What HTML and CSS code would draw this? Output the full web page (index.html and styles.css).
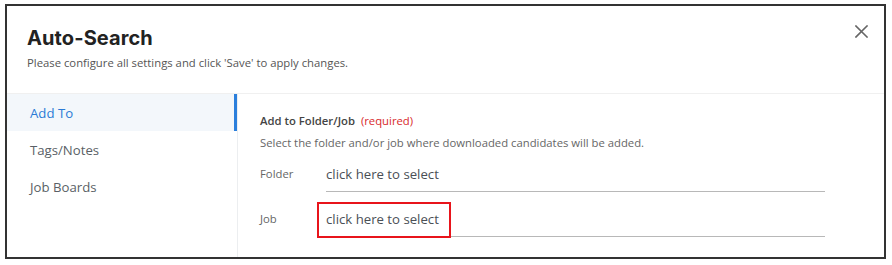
FILE: index.html
```html
<!DOCTYPE html>
<html>
<head>
<meta charset="utf-8">
<link rel="stylesheet" href="styles.css">
</head>
<body>
<div class="dialog">
  <header class="header">
    <div class="header-text">
      <h1 class="title">Auto-Search</h1>
      <p class="subtitle">Please configure all settings and click 'Save' to apply changes.</p>
    </div>
    <button class="close" aria-label="Close">
      <svg width="13" height="13" viewBox="0 0 13 13"><path d="M1 1L12 12M12 1L1 12" stroke="#666" stroke-width="1.6" stroke-linecap="square" fill="none"/></svg>
    </button>
  </header>
  <div class="body">
    <nav class="sidebar">
      <div class="nav-item active">Add To</div>
      <div class="nav-item">Tags/Notes</div>
      <div class="nav-item">Job Boards</div>
    </nav>
    <main class="content">
      <div class="section-title">Add to Folder/Job <span class="required">(required)</span></div>
      <div class="desc">Select the folder and/or job where downloaded candidates will be added.</div>
      <div class="field">
        <label class="field-label">Folder</label>
        <div class="input">click here to select</div>
      </div>
      <div class="field">
        <label class="field-label">Job</label>
        <div class="input">click here to select<span class="highlight"></span></div>
      </div>
    </main>
  </div>
</div>
</body>
</html>
```
FILE: styles.css
```css
html, body { margin: 0; padding: 0; background: #fff; }
body { padding: 4px 0 0 5px; font-family: "Open Sans", "Liberation Sans", sans-serif; }
.dialog {
  width: 881px;
  height: 255px;
  box-sizing: border-box;
  border: 2px solid #333;
  background: #fff;
  display: flex;
  flex-direction: column;
  overflow: hidden;
}
.header {
  height: 88px;
  box-sizing: border-box;
  border-bottom: 1px solid #f0f0f0;
  display: flex;
  justify-content: space-between;
  padding: 0 0 0 20px;
}
.title {
  margin: 0;
  padding-top: 20px;
  font-family: "Inter", "Liberation Sans", sans-serif;
  font-weight: 700;
  font-size: 20px;
  line-height: 24px;
  color: #222;
  letter-spacing: 0.1px;
}
.subtitle {
  margin: 4px 0 0;
  font-size: 11.3px;
  line-height: 17px;
  color: #555;
}
.close {
  border: 0;
  background: none;
  padding: 0;
  margin: 19px 15px 0 0;
  width: 14px;
  height: 14px;
  display: flex;
  align-items: flex-start;
}
.body {
  flex: 1;
  display: flex;
}
.sidebar {
  width: 231px;
  box-sizing: border-box;
  border-right: 1px solid #eceef0;
  display: flex;
  flex-direction: column;
}
.nav-item {
  height: 37px;
  line-height: 38px;
  padding-left: 23px;
  font-size: 13.2px;
  color: #5a5f66;
}
.nav-item.active {
  background: #f3f7fb;
  color: #2a7bd6;
  box-shadow: inset -3px 0 0 #2b7fdc;
}
.content {
  flex: 1;
  padding: 18px 0 0 22px;
}
.section-title {
  font-size: 11.3px;
  line-height: 17px;
  font-weight: 600;
  color: #444;
}
.required {
  color: #d8292b;
  font-weight: 400;
  margin-left: 3px;
}
.desc {
  margin-top: 5px;
  font-size: 11.3px;
  line-height: 17px;
  color: #666;
}
.field {
  display: flex;
  align-items: flex-end;
  margin-top: 10px;
}
.field + .field { margin-top: 14px; }
.field-label {
  width: 66px;
  font-size: 11.3px;
  line-height: 26px;
  padding-bottom: 5px;
  color: #666;
}
.input {
  position: relative;
  width: 499px;
  height: 26px;
  padding-bottom: 4px;
  line-height: 26px;
  font-size: 13.2px;
  color: #4a4f55;
  border-bottom: 1px solid #b8b8b8;
}
.highlight {
  position: absolute;
  left: -9px;
  top: -4px;
  width: 134px;
  height: 36px;
  box-sizing: border-box;
  border: 2px solid #e8141b;
}
```
